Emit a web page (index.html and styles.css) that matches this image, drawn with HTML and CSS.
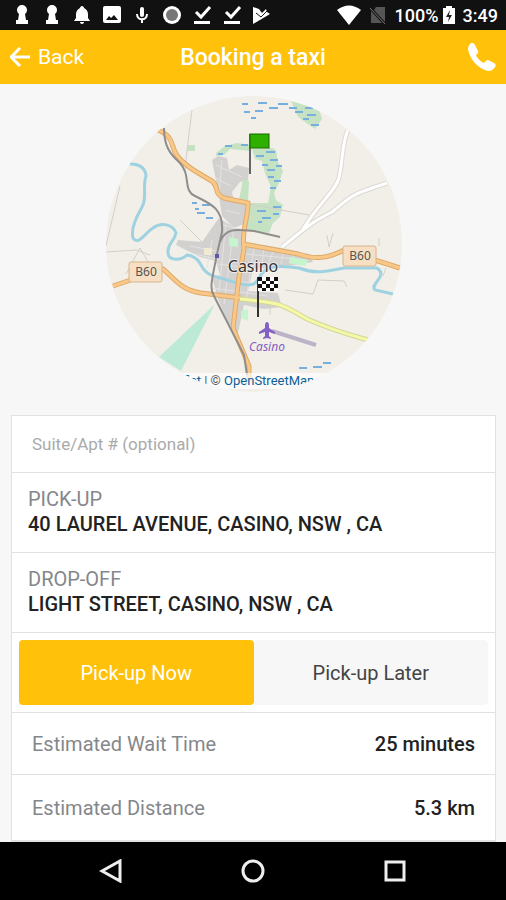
FILE: index.html
```
<!DOCTYPE html>
<html lang="en">
<head>
    <meta charset="UTF-8">
    <meta name="viewport" content="width=device-width, initial-scale=1.0">
    <title>Booking a taxi</title>
    <link rel="stylesheet" href="styles.css">
</head>
<body>
<div class="status-bar">
    <div class="status-icons">
        <svg viewBox="0 0 20 20"><path d="M10 0a5 5 0 0 1 5 5c0 2-1 3-2 4l1 6h2v4H4v-4h2l1-6C6 8 5 7 5 5a5 5 0 0 1 5-5z"/></svg>
        <svg viewBox="0 0 20 20"><path d="M10 0a5 5 0 0 1 5 5c0 2-1 3-2 4l1 6h2v4H4v-4h2l1-6C6 8 5 7 5 5a5 5 0 0 1 5-5z"/></svg>
        <svg viewBox="0 0 20 20"><path d="M10 1c1 0 2 1 2 2 2 1 4 3 4 6v4l2 3H2l2-3V9c0-3 2-5 4-6 0-1 1-2 2-2zM8 17h4c0 1-1 2-2 2s-2-1-2-2z"/></svg>
        <svg viewBox="0 0 20 20"><path fill-rule="evenodd" d="M3 1h14q2 0 2 2v13q0 2-2 2H3q-2 0-2-2V3q0-2 2-2zM4 15h12l-4-5-3 3-2-2z"/></svg>
        <svg viewBox="0 0 20 20"><path d="M10 2q2 0 2 2v6q0 2-2 2t-2-2V4q0-2 2-2z"/><path d="M5 9c0 7 10 7 10 0M10 14v4" fill="none" stroke="#fff" stroke-width="2"/></svg>
        <svg viewBox="0 0 20 20"><circle cx="10" cy="10" r="9"/><circle cx="10" cy="10" r="6" fill="#777"/></svg>
        <svg viewBox="0 0 20 20"><path d="M4 7l5 5 9-10" fill="none" stroke="#fff" stroke-width="3"/><path d="M2 16h16v3H2z"/></svg>
        <svg viewBox="0 0 20 20"><path d="M4 7l5 5 9-10" fill="none" stroke="#fff" stroke-width="3"/><path d="M2 16h16v3H2z"/></svg>
        <svg viewBox="0 0 20 20"><path d="M1 2l6 2 3 4 4-4 1 3 3 2L1 19z"/><path d="M4 8l5 4 6-6" fill="none" stroke="#111" stroke-width="1"/></svg>
    </div>
    <div class="status-info">
        <svg class="wifi" viewBox="0 0 24 20"><path d="M0 5Q12-4 24 5L12 20z"/></svg>
        <svg class="no-sim" viewBox="0 0 18 20"><path fill="#555" d="M7 2h9v15L5 5zM2 6l11 12H2z"/><path d="M1 3l15 16" stroke="#777" stroke-width="1"/></svg>
        <span>100%</span>
        <svg class="battery" viewBox="0 0 12 20"><path d="M3 1h6v2h3v16H0V3h3z"/><path d="M7 5l-4 7h3l-1 5 4-7H6z" fill="#222"/></svg>
        <span>3:49</span>
    </div>
</div>

<header class="nav-bar">
    <a class="back" href="#">
        <svg viewBox="0 0 20 20"><path d="M20 10H2M10 1l-9 9 9 9" fill="none" stroke="#fff" stroke-width="3"/></svg>
        Back
    </a>
    <h1>Booking a taxi</h1>
    <button class="call" type="button" aria-label="Call">
        <svg viewBox="0 0 28 28"><path d="M2 1C4-1 6 0 7 2l3 6c1 2-1 3-2 4 1 3 5 7 8 8 1-1 2-3 4-3l6 3c2 1 2 3 1 4-2 3-4 4-7 4C10 26 1 15 0 6c0-2 1-4 2-5z"/></svg>
    </button>
</header>

<main>
    <div class="map">
        <svg viewBox="106 96 296 296">
            <rect class="land" x="106" y="96" width="296" height="296"/>

            <!-- built-up areas -->
            <g class="urban">
                <path d="M212 160l6-4 9 2 2 12 8-5 12 3-1 12-8 2-8 10 2 9 12 3-2 20-10 4-12-12-3-20z"/>
                <path d="M219 218l23 14 4 10 35 6 28 6 4 8-32 5-28 2-5 22 30 2 4 14-18 2-20-4-6 28-10-10-10-24-6-22 8-2-4-14-16-4-24-12 2-5 24 2 14-20z"/>
            </g>
            <path class="streets" d="M216 165l26 12M215 178l16 8M222 160l-3 34M225 210l15 4M222 225l18 4M190 246l30 6M195 254l24 6M212 240l-5 28M226 222l-7 70M234 226l-10 78M245 246l-6 50M254 247l-8 54M264 248l-7 54M274 249l-6 16M284 250l-3 14M294 252l-2 12M218 264l60 8M214 278l56 8M212 288l56 8M246 254l60 6"/>
            <rect x="204" y="248" width="8" height="7" fill="#f0ead2"/>

            <!-- parks -->
            <g class="park">
                <path d="M216 153l9-7 12-3 13 2v6l-20-2-6 6-8 1z"/>
                <path d="M252 149l20-1 4 2 2 12 5 9-4 12-5 10 2 7 7 5-3 12-7 6-4 10-23-2 1-28h21l3-16-6-14-3-12-7-2z"/>
                <path d="M243 179l6 2-1 22-9-3z"/>
                <path d="M291 101l28 8 3 10-7 10-17-12z"/>
                <path d="M187 145h8v6h-8z"/>
            </g>
            <g class="green">
                <path d="M229 237l9 2v8l-9-1zM290 257l18 3-3 6-16-3zM241 311l7-2v12l-7-3z"/>
            </g>
            <path class="wedge" d="M215 304l-56 53 22 14z"/>

            <!-- wetland marks -->
            <path class="marsh" d="M242 104h6M244 112h6M251 118h5M258 103h9M255 111h8M269 108h9M278 104h10M289 108h8M295 112h8M305 108h8M307 115h9M303 119h6M311 125h8M225 146h7M241 145h7M218 154h5M256 156h8M266 152h9M270 160h8M262 165h6M276 166h6M267 170h8M268 177h6M274 181h7M270 188h6M273 207h8M257 211h9M262 218h9M258 222h4M273 214h6M192 203h5M202 205h10M195 209h4M197 213h8M206 218h7M299 368h8M313 367h9M323 363h8"/>

            <!-- minor roads -->
            <path class="track" d="M192 110l-5 40-2 22M120 186l-14 60M248 204l61 11M285 290l28 4 5-14 26 1 3 6M327 235l2 12 4-14M379 238v8M106 252l30-2 14 5M180 220l22 22M126 274l14-26 14 24M270 305v10M386 268l-3 8"/>
            <path class="lane-edge" d="M348 130c-6 12-5 30-9 48-4 14-18 22-36 51M387 183c-40 13-35 13-55 29-20 10-24 14-50 35"/>
            <path class="lane" d="M348 130c-6 12-5 30-9 48-4 14-18 22-36 51M387 183c-40 13-35 13-55 29-20 10-24 14-50 35"/>

            <!-- river -->
            <path class="river" d="M130 164q15 0 16 12c-4 12 2 22-5 33-8 14-10 22-8 29 5 8 12-5 20-10 8-6 20-4 23 5-2 10-9 10-8 20 1 9 14 7 19 2 9 1 12 6 14 10 6 12 15 11 26 15 20 6 27 8 32-2 8-16 26-11 40-10 15 6 25 4 45 0h33c12 8-8 16-2 22l18 4"/>

            <!-- main roads -->
            <g class="road-edge">
                <path d="M158 130c16 7 12 13 18 24 8 12 24 20 36 27 8 7 1 12 12 17l24 5c0 18-7 26-4 46l-5 28-6 51 16 38v16"/>
                <path d="M243 244l55 10c17 6 30 4 44-3l14 3 44 14M113 286l50-17c12 10 18 21 38 24l40 5"/>
            </g>
            <g class="road">
                <path d="M158 130c16 7 12 13 18 24 8 12 24 20 36 27 8 7 1 12 12 17l24 5c0 18-7 26-4 46l-5 28-6 51 16 38v16"/>
                <path d="M243 244l55 10c17 6 30 4 44-3l14 3 44 14M113 286l50-17c12 10 18 21 38 24l40 5"/>
            </g>
            <path class="yellow-edge" d="M240 299c42 4 42 5 67 20 18 8 35 14 61 21"/>
            <path class="yellow" d="M240 299c42 4 42 5 67 20 18 8 35 14 61 21"/>

            <!-- railway -->
            <path class="rail" d="M164 128c0 18 6 26 15 34 13 13 3 28 16 34 14 7 29 12 27 36l-5 22c-5 26-8 34-3 42l30 59 3 20M220 242c6-16 20-12 34-11l26 6"/>
            <rect x="215" y="254" width="4" height="4" fill="#5a5aa8"/>

            <!-- airfield -->
            <path class="runway" d="M272 331l44 14"/>
            <path class="plane" d="M267 322q2 0 2 4v2l6 4v2l-6-2v4l2 2v1l-4-1-4 1v-1l2-2v-4l-6 2v-2l6-4v-2q0-4 2-4z"/>

            <g class="shield">
                <rect x="129" y="262" width="33" height="20" rx="2"/>
                <rect x="343" y="246" width="33" height="20" rx="2"/>
            </g>
            <text class="shield-text" x="146" y="276">B60</text>
            <text class="shield-text" x="360" y="260">B60</text>
            <text class="town" x="253" y="272">Casino</text>
            <text class="airport" x="267" y="351">Casino</text>

            <!-- pick-up flag -->
            <path d="M250 134v40" stroke="#666" stroke-width="2"/>
            <rect x="250" y="134" width="19" height="14" fill="#2eb000" stroke="#176b00"/>

            <!-- drop-off flag -->
            <path d="M258 277v40" stroke="#333" stroke-width="2"/>
            <rect x="258" y="277" width="20" height="14" fill="#fff"/>
            <path d="M258 277h4v4h-4zM266 277h4v4h-4zM274 277h4v4h-4zM262 281h4v3h-4zM270 281h4v3h-4zM258 284h4v4h-4zM266 284h4v4h-4zM274 284h4v4h-4zM262 288h4v3h-4zM270 288h4v3h-4z" fill="#111"/>
        </svg>
        <div class="attribution"><a href="#">Leaflet</a> | © <a href="#">OpenStreetMap</a></div>
    </div>

    <form class="booking">
        <input class="suite" type="text" placeholder="Suite/Apt # (optional)" aria-label="Suite/Apt # (optional)">
        <div class="address">
            <span class="label">PICK-UP</span>
            <strong>40 LAUREL AVENUE, CASINO, NSW , CA</strong>
        </div>
        <div class="address">
            <span class="label">DROP-OFF</span>
            <strong>LIGHT STREET, CASINO, NSW , CA</strong>
        </div>
        <div class="when">
            <button class="active" type="button">Pick-up Now</button>
            <button type="button">Pick-up Later</button>
        </div>
        <div class="estimate">
            <span class="label">Estimated Wait Time</span>
            <strong>25 minutes</strong>
        </div>
        <div class="estimate">
            <span class="label">Estimated Distance</span>
            <strong>5.3 km</strong>
        </div>
    </form>
</main>

<nav class="system-nav">
    <button type="button" aria-label="Back"><svg viewBox="0 0 24 24"><path d="M21 2v20L3 12z"/></svg></button>
    <button type="button" aria-label="Home"><svg viewBox="0 0 24 24"><circle cx="12" cy="12" r="10"/></svg></button>
    <button type="button" aria-label="Recent apps"><svg viewBox="0 0 24 24"><path d="M3 3h18v18H3z"/></svg></button>
</nav>
</body>
</html>
```
FILE: styles.css
```
* {
    box-sizing: border-box;
}
body {
    height: 100vh;
    margin: 0;
    display: flex;
    flex-direction: column;
    font-family: Roboto, "Liberation Sans", sans-serif;
    font-size: 20px;
    color: #222;
    background: #f7f7f7;
    overflow: hidden;
}
button {
    font: inherit;
    border: 0;
    padding: 0;
    background: none;
}
svg {
    display: block;
}
strong {
    font-weight: 500;
}

.status-bar {
    display: flex;
    flex: none;
    justify-content: space-between;
    align-items: center;
    height: 30px;
    padding: 0 8px 0 12px;
    background: #111;
    color: #fff;
    font-size: 18px;
    font-weight: 500;
}
.status-bar svg {
    fill: #fff;
}
.status-icons {
    display: flex;
    gap: 10px;
}
.status-icons svg {
    width: 20px;
    height: 20px;
}
.status-info {
    display: flex;
    align-items: center;
    gap: 8px;
}
.status-info svg {
    height: 20px;
}
.status-info .battery {
    width: 12px;
    margin-left: -4px;
}

.nav-bar {
    display: grid;
    grid-template-columns: 1fr auto 1fr;
    flex: none;
    align-items: center;
    height: 54px;
    padding: 0 10px;
    background: #ffc10a;
    color: #fff;
}
.nav-bar h1 {
    margin: 0;
    font-size: 23px;
    font-weight: 500;
}
.back {
    display: flex;
    align-items: center;
    gap: 8px;
    color: #fff;
    font-size: 21px;
    text-decoration: none;
}
.back svg {
    width: 20px;
    height: 20px;
}
.call {
    justify-self: end;
}
.call svg {
    width: 28px;
    height: 28px;
    fill: #fff;
}

main {
    flex: 1;
    min-height: 0;
    padding: 12px 10px 0 11px;
    overflow: hidden;
}
.map {
    position: relative;
    width: 296px;
    height: 296px;
    margin: 0 auto 23px;
    border-radius: 50%;
    overflow: hidden;
}
.attribution {
    position: absolute;
    bottom: 3px;
    left: 0;
    width: 100%;
    padding-left: 56px;
    background: rgba(255, 255, 255, 0.7);
    color: #555;
    font-size: 13px;
    line-height: 16px;
    white-space: nowrap;
}
.attribution a {
    color: #0b6099;
    text-decoration: none;
}
.land {
    fill: #f2efe9;
}
.urban {
    fill: #d3d1d0;
}
.park {
    fill: #c5e3c3;
}
.green {
    fill: #c4f5cc;
}
.wedge {
    fill: #bde9d7;
}
.streets, .track, .lane, .lane-edge, .river, .road, .road-edge, .yellow, .yellow-edge, .rail, .marsh, .runway {
    fill: none;
}
.streets {
    stroke: #e4e2e1;
}
.marsh {
    stroke: #76aee0;
    stroke-width: 2;
}
.track {
    stroke: #d2cfca;
}
.lane-edge {
    stroke: #dcd8d3;
    stroke-width: 5;
}
.lane {
    stroke: #fff;
    stroke-width: 3;
}
.river {
    stroke: #9fd2e0;
    stroke-width: 3;
}
.road-edge {
    stroke: #dfa968;
    stroke-width: 5;
}
.road {
    stroke: #f9c887;
    stroke-width: 3;
}
.yellow-edge {
    stroke: #d2d79a;
    stroke-width: 5;
}
.yellow {
    stroke: #f5f8a5;
    stroke-width: 3;
}
.rail {
    stroke: #8f8d8c;
    stroke-width: 2;
}
.runway {
    stroke: #bbb4c9;
    stroke-width: 4;
}
.plane, .airport {
    fill: #8461c4;
}
.shield {
    fill: #f7dfc3;
    stroke: #d8b48d;
}
.shield-text, .town, .airport {
    font-family: "Noto Sans", sans-serif;
    text-anchor: middle;
}
.shield-text {
    font-size: 12px;
    fill: #555;
}
.town {
    font-size: 16px;
    fill: #333;
    stroke: rgba(255, 255, 255, 0.6);
    stroke-width: 2px;
    paint-order: stroke;
}
.airport {
    font-size: 12px;
    font-style: italic;
}

.booking {
    display: flex;
    flex-direction: column;
    border: 1px solid #e2e2e2;
    background: #fff;
}
.booking > * {
    border-bottom: 1px solid #e2e2e2;
}
.label {
    color: #84878b;
}
.suite {
    height: 57px;
    padding: 0 20px;
    border-width: 0 0 1px;
    background: none;
    font: inherit;
    font-size: 17px;
}
.suite::placeholder {
    color: #aaa;
}
.address {
    display: flex;
    flex-direction: column;
    height: 80px;
    padding: 14px 16px;
    line-height: 25px;
}
.when {
    display: flex;
    height: 80px;
    padding: 7px;
}
.when button {
    flex: 1;
    border-radius: 4px;
    background: #f7f7f7;
    color: #444;
}
.when .active {
    background: #ffc10a;
    color: #fff;
}
.estimate {
    display: flex;
    justify-content: space-between;
    align-items: center;
    height: 62px;
    padding: 0 20px;
}
.estimate:last-child {
    height: 66px;
}

.system-nav {
    display: flex;
    flex: none;
    justify-content: center;
    align-items: center;
    gap: 118px;
    height: 58px;
    background: #000;
}
.system-nav svg {
    width: 24px;
    height: 24px;
    fill: none;
    stroke: #eee;
    stroke-width: 3;
}
```
